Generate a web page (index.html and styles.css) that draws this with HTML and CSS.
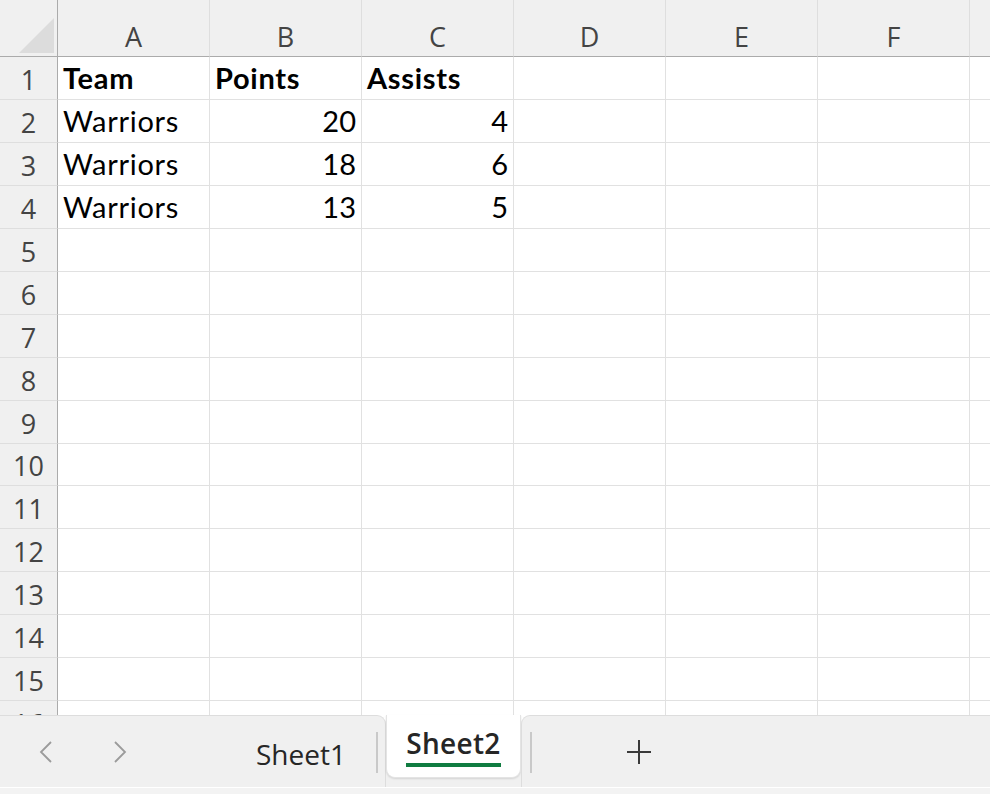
FILE: index.html
```html
<!DOCTYPE html>
<html lang="en">
<head>
    <meta charset="UTF-8">
    <meta name="viewport" content="width=device-width, initial-scale=1.0">
    <title>Sheet2</title>
    <link rel="stylesheet" href="styles.css">
</head>
<body>
    <div class="sheet">
        <div class="row head">
            <div class="rh corner"><span class="tri"></span></div>
            <div class="col">A</div><div class="col">B</div><div class="col">C</div><div class="col">D</div><div class="col">E</div><div class="col">F</div><div class="col"></div>
        </div>
        <div class="row">
            <div class="rh">1</div>
            <div class="cell txt bold">Team</div><div class="cell txt bold">Points</div><div class="cell txt bold">Assists</div><div class="cell"></div><div class="cell"></div><div class="cell"></div><div class="cell"></div>
        </div>
        <div class="row">
            <div class="rh">2</div>
            <div class="cell txt">Warriors</div><div class="cell num">20</div><div class="cell num">4</div><div class="cell"></div><div class="cell"></div><div class="cell"></div><div class="cell"></div>
        </div>
        <div class="row">
            <div class="rh">3</div>
            <div class="cell txt">Warriors</div><div class="cell num">18</div><div class="cell num">6</div><div class="cell"></div><div class="cell"></div><div class="cell"></div><div class="cell"></div>
        </div>
        <div class="row">
            <div class="rh">4</div>
            <div class="cell txt">Warriors</div><div class="cell num">13</div><div class="cell num">5</div><div class="cell"></div><div class="cell"></div><div class="cell"></div><div class="cell"></div>
        </div>
        <div class="row"><div class="rh">5</div><div class="cell"></div><div class="cell"></div><div class="cell"></div><div class="cell"></div><div class="cell"></div><div class="cell"></div><div class="cell"></div></div>
        <div class="row"><div class="rh">6</div><div class="cell"></div><div class="cell"></div><div class="cell"></div><div class="cell"></div><div class="cell"></div><div class="cell"></div><div class="cell"></div></div>
        <div class="row"><div class="rh">7</div><div class="cell"></div><div class="cell"></div><div class="cell"></div><div class="cell"></div><div class="cell"></div><div class="cell"></div><div class="cell"></div></div>
        <div class="row"><div class="rh">8</div><div class="cell"></div><div class="cell"></div><div class="cell"></div><div class="cell"></div><div class="cell"></div><div class="cell"></div><div class="cell"></div></div>
        <div class="row"><div class="rh">9</div><div class="cell"></div><div class="cell"></div><div class="cell"></div><div class="cell"></div><div class="cell"></div><div class="cell"></div><div class="cell"></div></div>
        <div class="row short"><div class="rh">10</div><div class="cell"></div><div class="cell"></div><div class="cell"></div><div class="cell"></div><div class="cell"></div><div class="cell"></div><div class="cell"></div></div>
        <div class="row"><div class="rh">11</div><div class="cell"></div><div class="cell"></div><div class="cell"></div><div class="cell"></div><div class="cell"></div><div class="cell"></div><div class="cell"></div></div>
        <div class="row"><div class="rh">12</div><div class="cell"></div><div class="cell"></div><div class="cell"></div><div class="cell"></div><div class="cell"></div><div class="cell"></div><div class="cell"></div></div>
        <div class="row"><div class="rh">13</div><div class="cell"></div><div class="cell"></div><div class="cell"></div><div class="cell"></div><div class="cell"></div><div class="cell"></div><div class="cell"></div></div>
        <div class="row"><div class="rh">14</div><div class="cell"></div><div class="cell"></div><div class="cell"></div><div class="cell"></div><div class="cell"></div><div class="cell"></div><div class="cell"></div></div>
        <div class="row"><div class="rh">15</div><div class="cell"></div><div class="cell"></div><div class="cell"></div><div class="cell"></div><div class="cell"></div><div class="cell"></div><div class="cell"></div></div>
        <div class="row"><div class="rh">16</div><div class="cell"></div><div class="cell"></div><div class="cell"></div><div class="cell"></div><div class="cell"></div><div class="cell"></div><div class="cell"></div></div>
    </div>

    <div class="tabbar">
        <div class="seg seg-left">
            <button class="nav">
                <svg width="14" height="24" viewBox="0 0 14 24"><path d="M12 2 L2 12 L12 22" fill="none" stroke="#9b9b9b" stroke-width="1.8"/></svg>
            </button>
            <button class="nav">
                <svg width="14" height="24" viewBox="0 0 14 24"><path d="M2 2 L12 12 L2 22" fill="none" stroke="#9b9b9b" stroke-width="1.8"/></svg>
            </button>
            <div class="tab">Sheet1</div>
            <span class="sep"></span>
        </div>
        <div class="active-wrap">
            <div class="tab active"><span class="label">Sheet2</span></div>
        </div>
        <div class="seg seg-right">
            <span class="sep"></span>
            <button class="add">
                <svg width="26" height="26" viewBox="0 0 26 26"><path d="M13 1 V25 M1 13 H25" fill="none" stroke="#3a3a3a" stroke-width="2"/></svg>
            </button>
        </div>
    </div>
    <div class="status"></div>
</body>
</html>
```

FILE: styles.css
```css
* {
    margin: 0;
    padding: 0;
    box-sizing: border-box;
}

body {
    width: 990px;
    height: 794px;
    overflow: hidden;
    background: #fff;
    font-family: 'Open Sans', 'Noto Sans', sans-serif;
}

/* grid */
.sheet {
    height: 715px;
    overflow: hidden;
}

.row {
    display: flex;
    height: 43px;
}

.row.short {
    height: 42px;
}

.row.head {
    height: 57px;
}

.rh {
    flex: 0 0 58px;
    display: flex;
    align-items: flex-end;
    justify-content: center;
    padding-bottom: 6px;
    background: #f0f0f0;
    border-right: 1px solid #ababab;
    border-bottom: 1px solid #dedede;
    color: #444;
    font-size: 27px;
    line-height: 1;
}

.corner {
    position: relative;
    border-bottom: 1px solid #ababab;
}

.tri {
    position: absolute;
    left: 19px;
    top: 18px;
    width: 35px;
    height: 35px;
    background: #dcdcdc;
    clip-path: polygon(100% 0, 100% 100%, 0 100%);
}

.col {
    flex: 0 0 152px;
    display: flex;
    align-items: flex-end;
    justify-content: center;
    padding-bottom: 6px;
    background: #f0f0f0;
    border-right: 1px solid #dedede;
    border-bottom: 1px solid #ababab;
    color: #444;
    font-size: 27px;
    line-height: 1;
}

.cell {
    flex: 0 0 152px;
    display: flex;
    align-items: flex-end;
    padding: 0 5px 7px 5px;
    border-right: 1px solid #e1e1e1;
    border-bottom: 1px solid #e1e1e1;
    font-family: Lato, 'Liberation Sans', sans-serif;
    font-size: 29px;
    line-height: 1;
    color: #000;
}

.cell.txt {
    letter-spacing: 0.7px;
}

.cell.bold {
    font-weight: 700;
}

.cell.num {
    justify-content: flex-end;
}

/* sheet tabs */
.tabbar {
    display: flex;
    height: 72px;
    background: #fff;
}

.seg {
    display: flex;
    align-items: center;
    height: 72px;
    background: #f0f0f0;
    border-top: 1px solid #dddddd;
}

.seg-left {
    flex: 0 0 386px;
    padding-left: 9px;
    border-right: 1px solid #dddddd;
    border-top-right-radius: 9px;
}

.seg-right {
    flex: 1;
    padding-left: 8px;
    border-left: 1px solid #dddddd;
    border-top-left-radius: 9px;
}

.nav,
.add {
    border: none;
    background: none;
    display: flex;
    align-items: center;
    justify-content: center;
}

.nav {
    width: 74px;
    height: 40px;
}

.tab {
    width: 150px;
    margin-left: 69px;
    padding-top: 5px;
    text-align: center;
    font-size: 28px;
    color: #262626;
}

.sep {
    width: 2px;
    height: 41px;
    margin-top: 2px;
    background: #c9c9c9;
}

.active-wrap {
    flex: 0 0 135px;
    height: 72px;
    background: #f0f0f0;
}

.active-wrap .tab.active {
    width: 135px;
    height: 63px;
    margin: 0;
    padding-top: 9px;
    background: #fff;
    border: 1px solid #e4e4e4;
    border-top: none;
    border-radius: 0 0 9px 9px;
    box-shadow: 0 1px 2px rgba(0, 0, 0, 0.12);
}

.label {
    display: inline-block;
    padding-bottom: 2px;
    border-bottom: 4px solid #107c41;
    font-weight: 600;
    letter-spacing: 0.3px;
    line-height: 1.2;
    color: #262626;
}

.add {
    width: 213px;
    height: 40px;
}

.status {
    height: 7px;
    border-top: 1px solid #fff;
    background: #f3f3f3;
}
```
